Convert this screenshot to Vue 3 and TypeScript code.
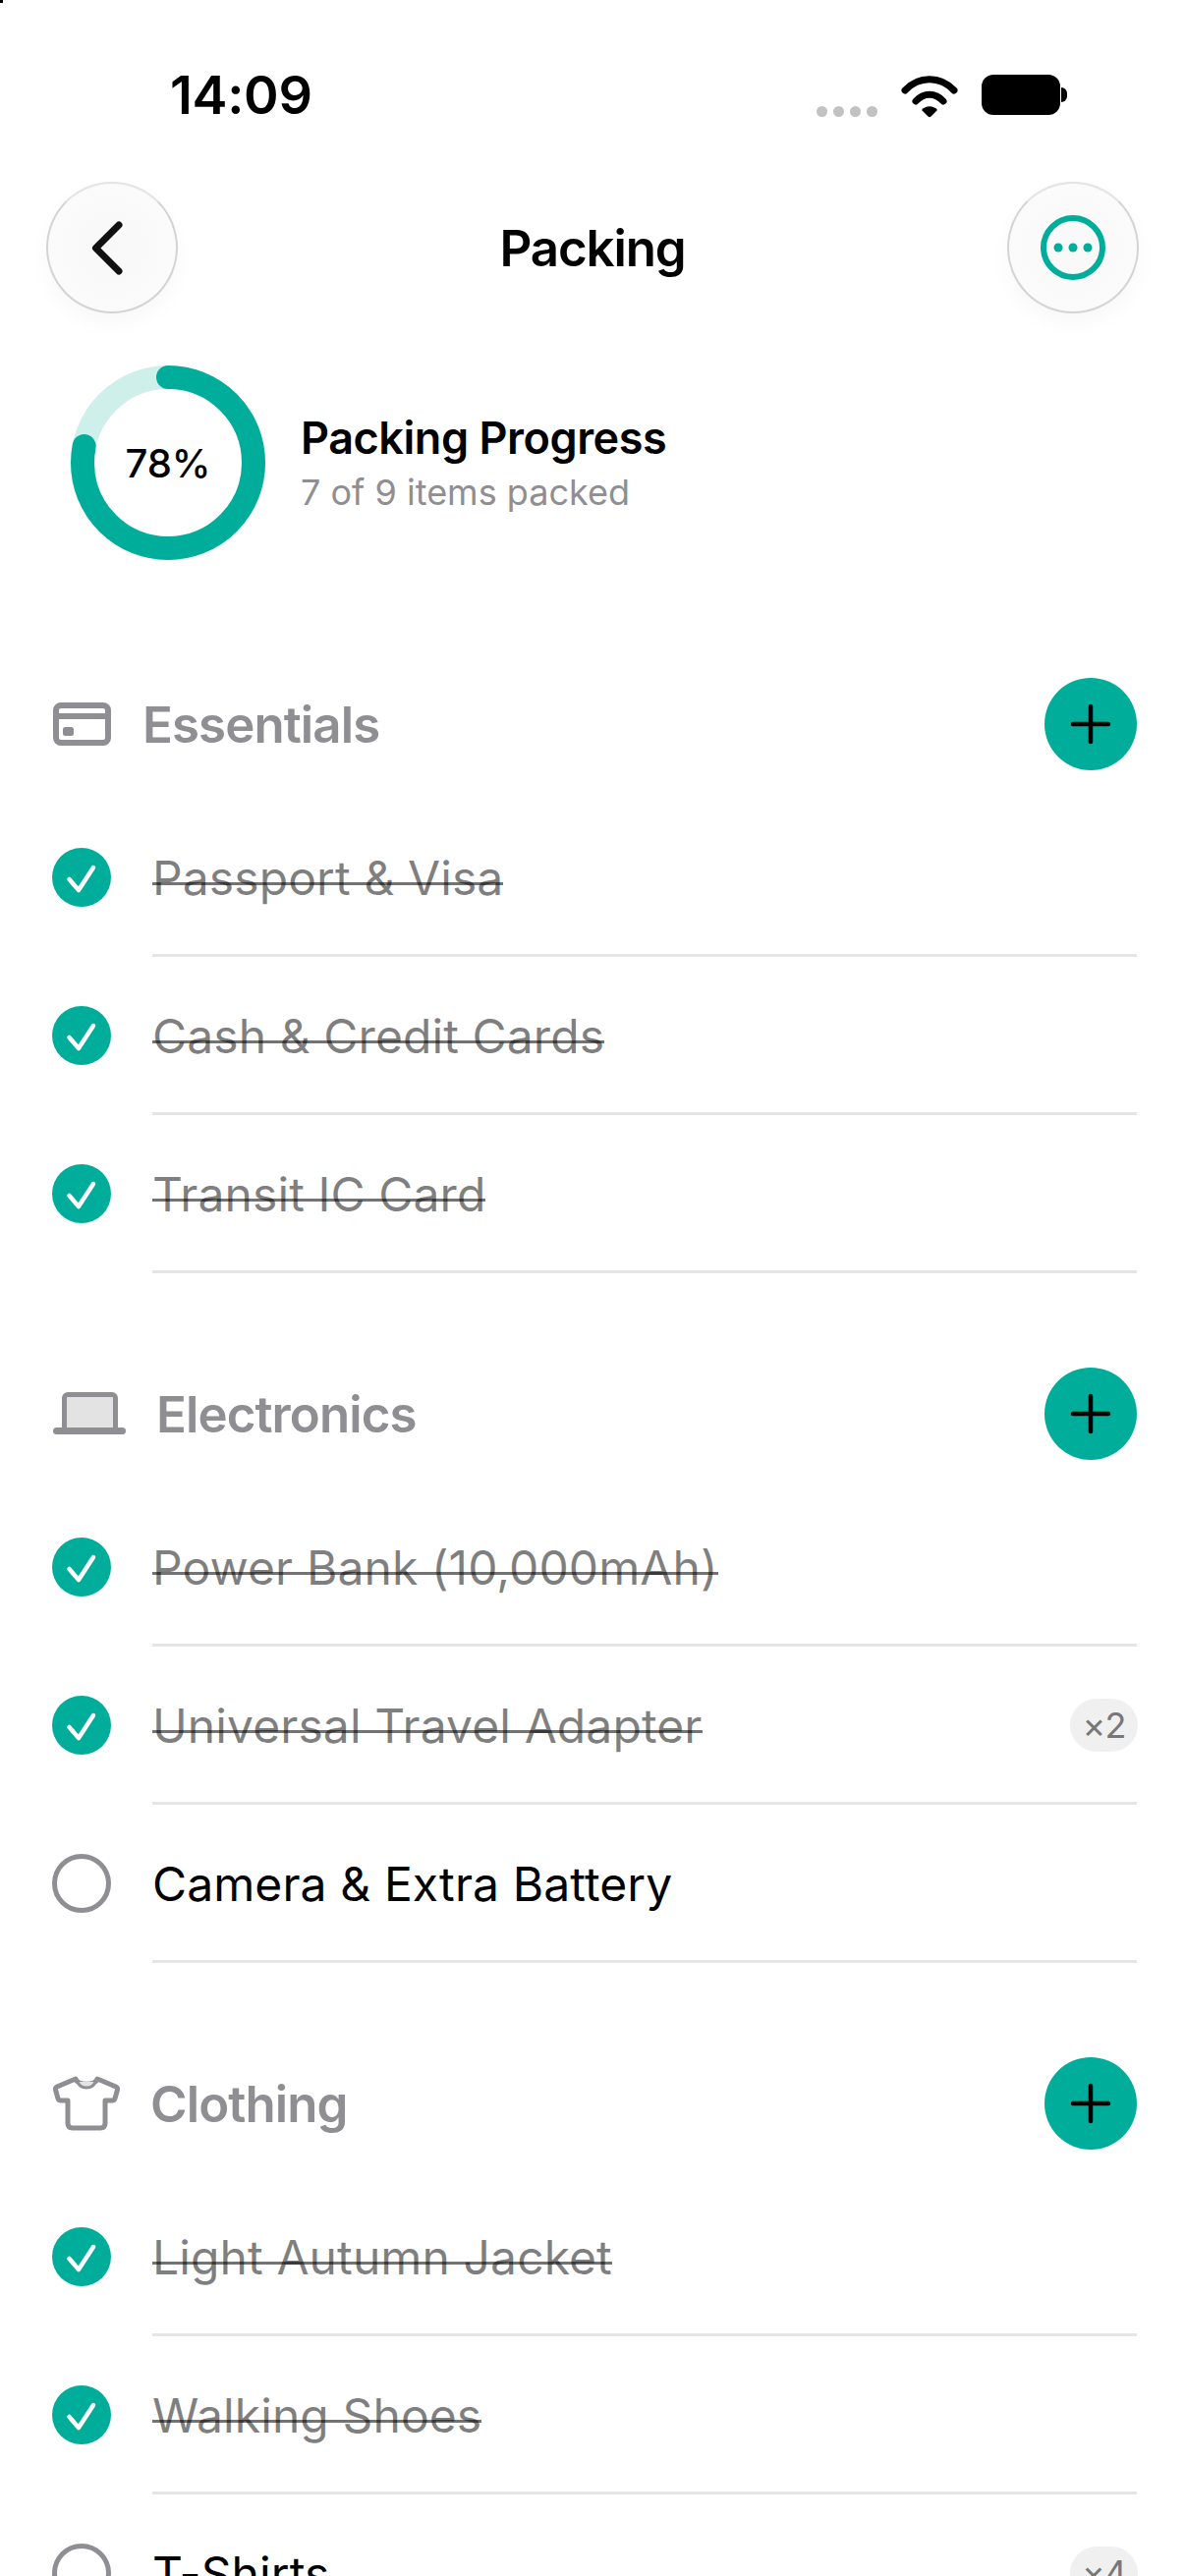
<template>
  <div class="screen">
    <i class="corner-mark"></i>
    <div class="status-bar">
      <span class="clock">14:09</span>
      <div class="status-icons">
        <div class="signal"><i v-for="n in 4" :key="n"></i></div>
        <svg class="wifi" width="58" height="44" viewBox="0 0 58 44">
          <path d="M4 16 C18 1 40 1 54 16" fill="none" stroke="#000" stroke-width="7" stroke-linecap="round" />
          <path d="M15 27 C23 18 35 18 43 27" fill="none" stroke="#000" stroke-width="7" stroke-linecap="round" />
          <path d="M21 36 C25 31 33 31 37 36 L30.500 42.500 C29.500 43.500 28.500 43.500 27.500 42.500 Z" fill="#000" />
        </svg>
        <div class="battery"><div class="battery-body"></div><div class="battery-tip"></div></div>
      </div>
    </div>

    <header class="nav">
      <button class="round-btn">
        <svg width="60" height="60" viewBox="0 0 60 60">
          <path d="M37 7 L13.500 30.500 L37 54" fill="none" stroke="#111" stroke-width="7" stroke-linecap="round" stroke-linejoin="round" />
        </svg>
      </button>
      <h1>Packing</h1>
      <button class="round-btn">
        <svg width="66" height="66" viewBox="0 0 66 66">
          <circle cx="33" cy="33" r="30" fill="none" stroke="#00ad9a" stroke-width="6" />
          <circle cx="18" cy="33" r="4.500" fill="#00ad9a" />
          <circle cx="33" cy="33" r="4.500" fill="#00ad9a" />
          <circle cx="48" cy="33" r="4.500" fill="#00ad9a" />
        </svg>
      </button>
    </header>

    <section class="progress">
      <div class="ring">
        <svg width="198" height="198" viewBox="0 0 198 198">
          <circle cx="99" cy="99" :r="ringR" fill="none" stroke="#cfefeb" stroke-width="24" />
          <circle
            cx="99"
            cy="99"
            :r="ringR"
            fill="none"
            stroke="#00ad9a"
            stroke-width="24"
            stroke-linecap="round"
            :stroke-dasharray="ringDash"
            transform="rotate(-90 99 99)"
          />
        </svg>
        <span class="ring-label">78%</span>
      </div>
      <div class="progress-text">
        <div class="progress-title">Packing Progress</div>
        <div class="progress-sub">7 of 9 items packed</div>
      </div>
    </section>

    <section v-for="group in groups" :key="group.name" class="group">
      <div class="group-head">
        <svg v-if="group.icon === 'card'" class="group-icon" width="60" height="44" viewBox="0 0 60 44">
          <rect x="3" y="3" width="53" height="38" rx="5" fill="none" stroke="#8e8e93" stroke-width="6" />
          <rect x="3" y="11" width="53" height="6" fill="#8e8e93" />
          <rect x="10" y="25" width="11" height="9" rx="2.500" fill="#8e8e93" />
        </svg>
        <svg v-else-if="group.icon === 'laptop'" class="group-icon" width="74" height="44" viewBox="0 0 74 44">
          <path d="M11.500 37 V6 a3.500 3.500 0 0 1 3.500 -3.500 H60 a3.500 3.500 0 0 1 3.500 3.500 V37" fill="#e3e3e3" stroke="#8e8e93" stroke-width="5" />
          <rect x="0" y="36" width="74" height="7" rx="3.500" fill="#8e8e93" />
        </svg>
        <svg v-else class="group-icon" width="68" height="56" viewBox="0 0 68 56">
          <path d="M23 3 L4 11 Q2 12 2.500 14 L5 23 Q5.500 25 8 25 H15 V48 Q15 53 20 53 H48 Q53 53 53 48 V25 H60 Q62.500 25 63 23 L65.500 14 Q66 12 64 11 L45 3 C43 10 25 10 23 3 Z" fill="none" stroke="#8e8e93" stroke-width="5" stroke-linejoin="round" />
          <path d="M25 6 C28 14 40 14 43 6" fill="#e3e3e3" stroke="#8e8e93" stroke-width="3" />
        </svg>
        <h2>{{ group.name }}</h2>
        <button class="add-btn">
          <svg width="42" height="42" viewBox="0 0 42 42">
            <path d="M21 3 V39 M3 21 H39" fill="none" stroke="#000" stroke-width="4.500" stroke-linecap="round" />
          </svg>
        </button>
      </div>
      <ul class="rows">
        <li v-for="item in group.items" :key="item.label" class="row">
          <span class="check" :class="{ done: item.done }">
            <svg v-if="item.done" width="60" height="60" viewBox="0 0 60 60">
              <path d="M17.500 32 L27 43 L42 20" fill="none" stroke="#fff" stroke-width="4.500" stroke-linecap="round" stroke-linejoin="round" />
            </svg>
          </span>
          <div class="row-body">
            <span class="row-label" :class="{ done: item.done }">{{ item.label }}</span>
            <span v-if="item.qty" class="qty">×{{ item.qty }}</span>
          </div>
        </li>
      </ul>
    </section>
  </div>
</template>

<script setup lang="ts">
interface Item {
  label: string
  done: boolean
  qty?: number
}

interface Group {
  name: string
  icon: 'card' | 'laptop' | 'shirt'
  items: Item[]
}

const ringR = 87
const circumference = 2 * Math.PI * ringR
const ringDash = `${circumference * 0.78} ${circumference}`

const groups: Group[] = [
  {
    name: 'Essentials',
    icon: 'card',
    items: [
      { label: 'Passport & Visa', done: true },
      { label: 'Cash & Credit Cards', done: true },
      { label: 'Transit IC Card', done: true },
    ],
  },
  {
    name: 'Electronics',
    icon: 'laptop',
    items: [
      { label: 'Power Bank (10,000mAh)', done: true },
      { label: 'Universal Travel Adapter', done: true, qty: 2 },
      { label: 'Camera & Extra Battery', done: false },
    ],
  },
  {
    name: 'Clothing',
    icon: 'shirt',
    items: [
      { label: 'Light Autumn Jacket', done: true },
      { label: 'Walking Shoes', done: true },
      { label: 'T-Shirts', done: false, qty: 4 },
    ],
  },
]
</script>

<style>
html,
body {
  margin: 0;
  background: #fff;
}
</style>

<style scoped>
.screen {
  position: relative;
  width: 1206px;
  height: 2622px;
  overflow: hidden;
  background: #fff;
  font-family: Inter, "Liberation Sans", sans-serif;
  color: #000;
}

.corner-mark {
  position: absolute;
  top: 0;
  left: 0;
  width: 3px;
  height: 3px;
  background: #000;
}

.status-bar {
  height: 185px;
  box-sizing: border-box;
  padding: 70px 120px 0 173px;
  display: flex;
  justify-content: space-between;
  align-items: flex-start;
}

.clock {
  font-size: 54px;
  line-height: 54px;
  font-weight: 600;
  letter-spacing: -0.3px;
}

.status-icons {
  display: flex;
  align-items: flex-start;
  gap: 24px;
  padding-top: 6px;
}

.signal {
  display: flex;
  gap: 6px;
  margin-top: 32px;
}

.signal i {
  width: 11px;
  height: 11px;
  border-radius: 50%;
  background: #c2c2c2;
}

.battery {
  display: flex;
  align-items: center;
}

.battery-body {
  width: 80px;
  height: 41px;
  border-radius: 12px;
  background: #000;
}

.battery-tip {
  width: 6px;
  height: 15px;
  margin-left: 1px;
  border-radius: 0 8px 8px 0;
  background: #000;
}

.nav {
  height: 134px;
  padding: 0 47px;
  display: flex;
  align-items: center;
  justify-content: space-between;
}

.nav h1 {
  margin: 0;
  font-size: 51px;
  font-weight: 600;
  letter-spacing: -1.1px;
}

.round-btn {
  width: 134px;
  height: 134px;
  padding: 0;
  box-sizing: border-box;
  border: 2px solid #d4d4d4;
  border-top-color: #e4e4e4;
  border-radius: 50%;
  background: radial-gradient(circle, #f8f8f8 0%, #fcfcfc 100%);
  box-shadow: 0 10px 22px rgba(0, 0, 0, 0.03);
  display: flex;
  align-items: center;
  justify-content: center;
}

.progress {
  margin-top: 53px;
  padding-left: 72px;
  display: flex;
  align-items: center;
  gap: 36px;
}

.ring {
  position: relative;
  width: 198px;
  height: 198px;
}

.ring svg {
  display: block;
}

.ring-label {
  position: absolute;
  inset: 0;
  display: flex;
  align-items: center;
  justify-content: center;
  font-size: 40px;
  font-weight: 500;
}

.progress-title {
  font-size: 45px;
  line-height: 54px;
  font-weight: 600;
  letter-spacing: -0.45px;
}

.progress-sub {
  margin-top: 6px;
  font-size: 36px;
  line-height: 44px;
  color: #8e8e93;
}

.group {
  padding: 0 49px 0 53px;
  margin-bottom: 95px;
}

.progress + .group {
  margin-top: 120px;
}

.group-head {
  height: 94px;
  display: flex;
  align-items: center;
}

.group-icon {
  margin-left: 1px;
}

.group-head h2 {
  margin: 0 0 0 31px;
  font-size: 51px;
  font-weight: 600;
  letter-spacing: -0.9px;
  color: #8e8e93;
}

.add-btn {
  margin-left: auto;
  width: 94px;
  height: 94px;
  padding: 0;
  border: none;
  border-radius: 50%;
  background: #00ad9a;
  display: flex;
  align-items: center;
  justify-content: center;
}

.rows {
  list-style: none;
  margin: 30px 0 0;
  padding: 0;
}

.row {
  height: 161px;
  display: flex;
  align-items: flex-start;
}

.check {
  flex: none;
  width: 60px;
  height: 60px;
  margin-top: 49px;
  box-sizing: border-box;
  border: 5px solid #8e8e93;
  border-radius: 50%;
  display: flex;
  align-items: center;
  justify-content: center;
}

.check.done {
  border: none;
  background: #00ad9a;
}

.row-body {
  flex: 1;
  margin-left: 42px;
  height: 160px;
  box-sizing: border-box;
  padding-top: 2px;
  border-bottom: 3px solid #e5e5e5;
  display: flex;
  align-items: center;
  justify-content: space-between;
}

.row-label {
  position: relative;
  font-size: 48px;
  line-height: 58px;
  letter-spacing: 0.1px;
}

.row-label.done {
  color: rgba(0, 0, 0, 0.5);
}

.row-label.done::after {
  content: "";
  position: absolute;
  left: 0;
  right: 0;
  top: 33px;
  height: 3px;
  background: rgba(0, 0, 0, 0.55);
}

.qty {
  width: 69px;
  height: 54px;
  margin-top: -2px;
  margin-right: -1px;
  border-radius: 27px;
  background: #f0f0f0;
  color: #777;
  font-size: 36px;
  line-height: 54px;
  letter-spacing: -1px;
  text-align: center;
}
</style>
